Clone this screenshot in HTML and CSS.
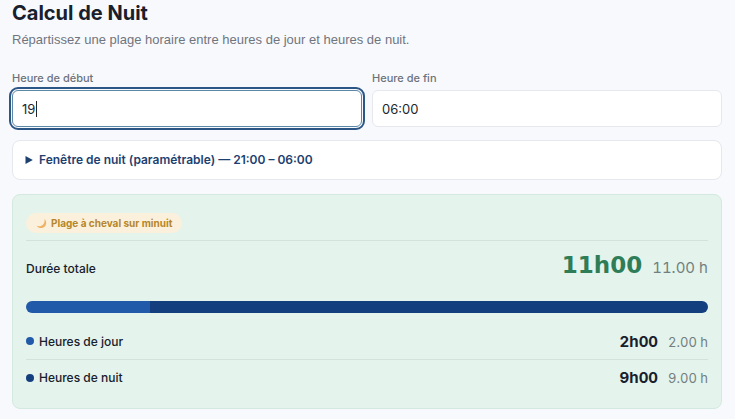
FILE: index.html
```html
<!DOCTYPE html>
<html lang="fr">
<head>
    <meta charset="UTF-8">
    <meta name="viewport" content="width=device-width, initial-scale=1.0">
    <title>Calcul de Nuit</title>
    <link rel="stylesheet" href="styles.css">
</head>
<body>
    <main class="container">
        <h1>Calcul de Nuit</h1>
        <p class="subtitle">Répartissez une plage horaire entre heures de jour et heures de nuit.</p>

        <form class="fields">
            <div class="field">
                <label for="debut">Heure de début</label>
                <div class="input-wrap">
                    <input type="text" id="debut" name="debut" value="19" class="active">
                    <span class="caret"></span>
                </div>
            </div>
            <div class="field">
                <label for="fin">Heure de fin</label>
                <input type="text" id="fin" name="fin" value="06:00">
            </div>
        </form>

        <details class="window">
            <summary>
                <svg class="arrow" viewBox="0 0 8 8" aria-hidden="true"><path d="M0.5 0 L7.8 4 L0.5 8 Z"/></svg>
                Fenêtre de nuit (paramétrable) — 21:00 – 06:00
            </summary>
        </details>

        <section class="result">
            <div class="badge-row">
                <span class="badge">
                    <svg class="moon" viewBox="0 0 12 12" aria-hidden="true"><path d="M9.2 1 C11.8 3 11.7 7.4 9.2 9.6 C6.6 11.9 2.6 11.3 0.8 8.5 C3.4 9.3 6.2 8.9 7.8 7 C9.3 5.3 9.7 3 9.2 1 Z"/></svg>
                    Plage à cheval sur minuit
                </span>
            </div>
            <div class="row total">
                <span class="name">Durée totale</span>
                <span class="value">11h00 <small>11.00 h</small></span>
            </div>
            <div class="bar">
                <div class="bar-day" style="width: 18.18%"></div>
                <div class="bar-night"></div>
            </div>
            <div class="row">
                <span class="name"><i class="dot day"></i>Heures de jour</span>
                <span class="value">2h00 <small>2.00 h</small></span>
            </div>
            <div class="row">
                <span class="name"><i class="dot night"></i>Heures de nuit</span>
                <span class="value">9h00 <small>9.00 h</small></span>
            </div>
        </section>
    </main>
</body>
</html>
```
FILE: styles.css
```css
* {
    box-sizing: border-box;
}
body {
    margin: 0;
    background-color: #f8f9fd;
    color: #17202c;
    font-family: Inter, "Liberation Sans", sans-serif;
}
.container {
    padding: 0 13px 10px 12px;
}
h1 {
    margin: 0;
    font-size: 20px;
    line-height: 26px;
    font-weight: 700;
}
.subtitle {
    margin: 4px 0 0;
    font-family: "Liberation Sans", sans-serif;
    font-size: 13px;
    line-height: 20px;
    color: #70757d;
}
.fields {
    display: grid;
    grid-template-columns: 1fr 1fr;
    gap: 10px;
    margin-top: 20px;
}
.field {
    display: flex;
    flex-direction: column;
    gap: 4px;
}
label {
    font-size: 11px;
    line-height: 16px;
    font-weight: 500;
    color: #6c727a;
}
.input-wrap {
    position: relative;
    display: flex;
}
input {
    width: 100%;
    height: 37px;
    padding: 0 9px;
    border: 1px solid #e6e8ee;
    border-radius: 6px;
    background-color: #fff;
    color: #22272f;
    font-family: inherit;
    font-size: 13px;
}
input.active,
input:focus {
    border-color: #5c88a8;
    outline: 2px solid #2b5686;
    outline-offset: 1px;
}
.caret {
    position: absolute;
    top: 11px;
    left: 24px;
    width: 1px;
    height: 16px;
    background-color: #22272f;
}
.window {
    margin-top: 13px;
    border: 1px solid #e6e8f0;
    border-radius: 8px;
    background-color: #fff;
}
summary {
    display: flex;
    align-items: center;
    gap: 6px;
    padding: 0 12px;
    font-size: 12px;
    line-height: 38px;
    font-weight: 600;
    color: #1d416f;
    cursor: pointer;
}
.arrow {
    width: 8px;
    height: 8px;
    fill: #1d416f;
}
.result {
    margin-top: 14px;
    padding: 18px 13px 13px;
    border: 1px solid #d3e9df;
    border-radius: 8px;
    background-color: #e4f3eb;
}
.badge-row {
    display: flex;
    padding-bottom: 7px;
    border-bottom: 1px solid #d3e3dc;
}
.badge {
    display: flex;
    align-items: center;
    gap: 4px;
    padding: 0 10px;
    border-radius: 10px;
    background-color: #fbf0dc;
    color: #b5862b;
    font-size: 10px;
    line-height: 20px;
    font-weight: 700;
}
.moon {
    width: 11px;
    height: 11px;
    fill: #efb263;
}
.row {
    display: flex;
    justify-content: space-between;
    align-items: center;
    height: 36px;
}
.row + .row {
    border-top: 1px solid #d3e3dc;
}
.name {
    display: flex;
    align-items: center;
    gap: 5px;
    font-size: 12px;
    font-weight: 500;
}
.value {
    display: flex;
    align-items: baseline;
    gap: 10px;
    font-size: 15px;
    font-weight: 700;
    font-variant-numeric: tabular-nums;
}
.value small {
    font-size: 13px;
    font-weight: 400;
    color: #727f80;
}
.total {
    align-items: baseline;
    height: 50px;
    margin-bottom: 10px;
    padding-top: 11px;
}
.total .value {
    font-family: "DejaVu Sans", sans-serif;
    font-size: 23px;
    color: #2f7d57;
}
.total small {
    font-family: Inter, sans-serif;
    font-size: 15px;
}
.bar {
    display: flex;
    height: 12px;
    margin-bottom: 10px;
    border-radius: 6px;
    overflow: hidden;
}
.bar-day {
    background-color: #205aa9;
}
.bar-night {
    flex: 1;
    background-color: #133f7e;
}
.dot {
    width: 8px;
    height: 8px;
    border-radius: 50%;
}
.day {
    background-color: #205aa9;
}
.night {
    background-color: #133f7e;
}
```
